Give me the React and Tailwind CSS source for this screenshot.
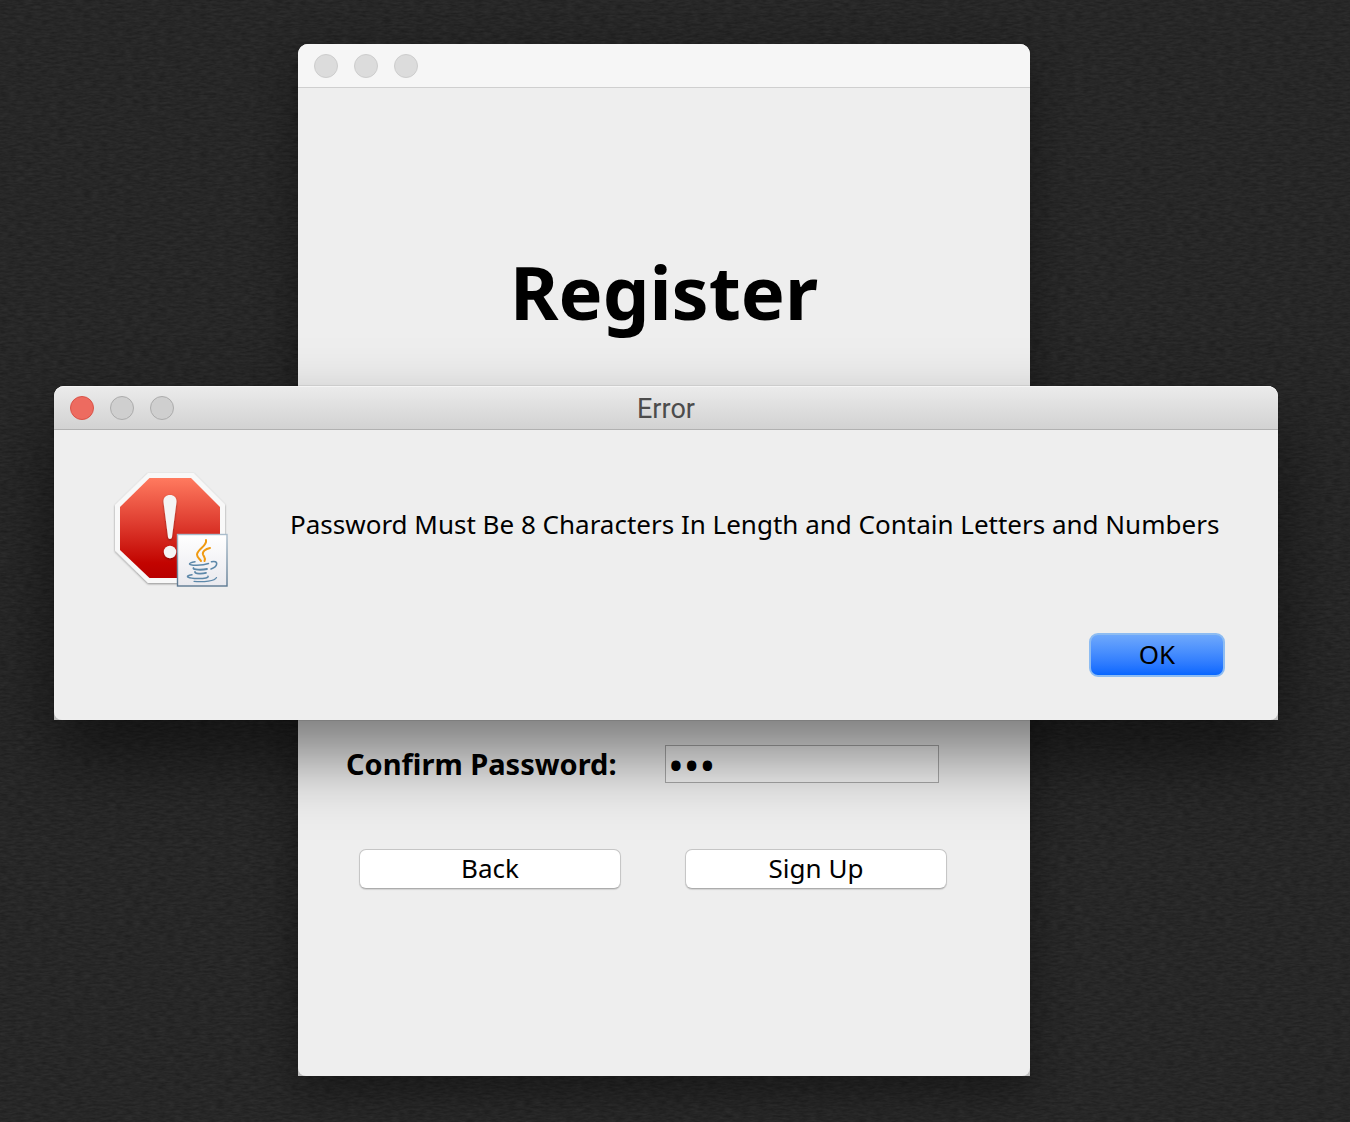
function PaperTexture() {
  return (
    <svg aria-hidden="true" className="absolute inset-0 h-full w-full">
      <filter id="paper" x="0" y="0" width="100%" height="100%" colorInterpolationFilters="sRGB">
        <feTurbulence type="fractalNoise" baseFrequency="0.12 0.45" numOctaves="3" seed="4" />
        <feColorMatrix
          type="matrix"
          values="0.08 0 0 0 0.113  0.08 0 0 0 0.113  0.08 0 0 0 0.113  0 0 0 0 1"
        />
      </filter>
      <rect width="100%" height="100%" filter="url(#paper)" />
    </svg>
  );
}

function WindowDots({ closeActive }) {
  const idle = closeActive
    ? "size-6 rounded-full border border-[#acacac] bg-[#cfcfcf]"
    : "size-6 rounded-full border border-[#cdcdcd] bg-[#dcdcdc]";
  const close = closeActive
    ? "size-6 rounded-full border border-[#d95348] bg-[#ed6b60]"
    : idle;
  return (
    <div className="flex gap-4">
      <button type="button" aria-label="Close" className={close} />
      <button type="button" aria-label="Minimize" className={idle} />
      <button type="button" aria-label="Zoom" className={idle} />
    </div>
  );
}

function StopIcon() {
  return (
    <svg aria-hidden="true" width="128" height="128" viewBox="0 0 128 128" className="shrink-0">
      <defs>
        <linearGradient id="stopRed" x1="0" y1="0" x2="0" y2="1">
          <stop offset="0" stopColor="#ff7a5f" />
          <stop offset="0.45" stopColor="#df3d30" />
          <stop offset="0.85" stopColor="#c20400" />
          <stop offset="1" stopColor="#b90000" />
        </linearGradient>
        <linearGradient id="badge" x1="0" y1="0" x2="0" y2="1">
          <stop offset="0" stopColor="#ffffff" />
          <stop offset="1" stopColor="#e9e9ee" />
        </linearGradient>
        <linearGradient id="badgeEdge" x1="0" y1="0" x2="0" y2="1">
          <stop offset="0" stopColor="#a9bccb" />
          <stop offset="1" stopColor="#5b7891" />
        </linearGradient>
        <filter id="soft" x="-10%" y="-10%" width="120%" height="125%">
          <feDropShadow dx="0" dy="1" stdDeviation="1" floodOpacity="0.4" />
        </filter>
      </defs>
      <path d="M42 7H87.500L119 38.500V85.500L87.500 117H42L9 84.500V39Z" fill="#f8f8f8" filter="url(#soft)" />
      <path d="M43.500 12H85L114 41V84L85 112H43.500L14 84V41Z" fill="url(#stopRed)" />
      <g fill="#f4f4f4" filter="url(#soft)">
        <path d="M64 29C68 29 70.800 31.500 70.500 36L66 71C65.700 73.500 62.300 73.500 62 71L57.500 36C57.200 31.500 60 29 64 29Z" />
        <circle cx="64" cy="86" r="6.200" />
      </g>
      <rect x="71.500" y="68.500" width="49.500" height="51.500" fill="url(#badge)" stroke="url(#badgeEdge)" strokeWidth="1.400" />
      <g fill="none" stroke="#f09a10" strokeLinecap="round">
        <path d="M100 74C101.500 80 91.500 83 91 88.500C91 91.500 94 93 95 95" strokeWidth="2" />
        <path d="M104 82C99.500 83 96 85.500 97 88.500C98 91 100 92 98.500 95" strokeWidth="2" />
      </g>
      <g fill="none" stroke="#5d88a9" strokeLinecap="round">
        <path d="M89 95.800C81 97 82 99.200 90 99.200C96 99.300 99 98.800 102.500 97.500" strokeWidth="1.500" />
        <path d="M105.500 95.800C112.500 94 112.500 100.500 105 103" strokeWidth="1.600" />
        <path d="M87.500 102C86.500 104 96 104.200 101 103" strokeWidth="1.800" />
        <path d="M89 106C89 107.800 96 108 100 106.800" strokeWidth="1.800" />
        <path d="M86 108.800C77.500 110.200 82 112.600 92 112.600C99 112.600 103 111.600 102 110.200" strokeWidth="1.500" />
        <path d="M88 115.400C98 116.200 109 115 110.500 111.500" strokeWidth="1.200" />
      </g>
    </svg>
  );
}

function RegisterWindow() {
  return (
    <section className="col-start-1 row-start-1 mt-[44px] mr-1 mb-[46px] w-full max-w-[732px] self-stretch justify-self-center rounded-t-[10px] bg-[#bdbdbd] shadow-[0_14px_40px_rgba(0,0,0,0.4)]">
      <div className="rounded-t-[10px] rounded-b-[8px] bg-[#eeeeee]">
        <header className="flex h-11 items-center rounded-t-[10px] border-b border-[#cfcfcf] bg-[#f6f6f6] px-4">
          <WindowDots />
        </header>
        <form className="flex h-[988px] flex-col px-12 pt-[150px]" onSubmit={(e) => e.preventDefault()}>
          <h1 className="text-center text-[74px] leading-[108px] font-bold">Register</h1>
          <div className="mt-[399px] flex items-center gap-11">
            <label htmlFor="confirm" className="w-[275px] shrink-0 text-[29px] leading-9 font-bold whitespace-nowrap">
              Confirm Password:
            </label>
            <input
              id="confirm"
              type="password"
              defaultValue="abc"
              className="h-[38px] w-[274px] min-w-0 border border-black/30 bg-white/35 px-0.5 text-[42px] outline-none"
            />
          </div>
          <div className="mt-[66px] flex gap-16 pr-[35px] pl-[13px]">
            <button type="button" className="h-10 flex-1 rounded-[7px] border border-[#c6c6c6] border-b-[#acacac] bg-white pb-0.5 text-[26px] leading-9 shadow-[0_1px_1px_rgba(0,0,0,0.12)]">
              Back
            </button>
            <button type="submit" className="h-10 flex-1 rounded-[7px] border border-[#c6c6c6] border-b-[#acacac] bg-white pb-0.5 text-[26px] leading-9 shadow-[0_1px_1px_rgba(0,0,0,0.12)]">
              Sign Up
            </button>
          </div>
        </form>
      </div>
    </section>
  );
}

function ErrorDialog() {
  return (
    <section
      role="alertdialog"
      aria-labelledby="dialog-title"
      aria-describedby="dialog-message"
      className="z-10 col-start-1 row-start-1 mt-[386px] w-full max-w-[1224px] self-start justify-self-center rounded-t-[10px] bg-[#bdbdbd] shadow-[0_0_1px_rgba(0,0,0,0.7),0_36px_70px_rgba(0,0,0,0.5)]"
    >
      <div className="rounded-t-[10px] rounded-b-[8px] bg-[#eeeeee]">
        <header className="grid h-11 grid-cols-3 items-center rounded-t-[10px] border-t border-b border-t-[#f5f5f5] border-b-[#b1b1b1] bg-linear-to-b from-[#ebebeb] to-[#d2d2d2] px-4">
          <WindowDots closeActive />
          <h2 id="dialog-title" className="pt-0.5 text-center font-[Roboto] text-[27px] leading-8 text-[#4c4c4c]">
            Error
          </h2>
        </header>
        <div className="flex h-[290px] flex-col pt-[36px] pr-[53px] pl-[52px]">
          <div className="flex items-start gap-[56px]">
            <StopIcon />
            <p id="dialog-message" className="mt-[38px] text-[26px] leading-10 whitespace-nowrap">
              Password Must Be 8 Characters In Length and Contain Letters and Numbers
            </p>
          </div>
          <button type="button" className="mt-[39px] h-11 w-[136px] self-end rounded-[9px] border-2 border-[#8dbcf2] bg-linear-to-b from-[#6ea8fb] to-[#0566ff] pb-0.5 text-[26px] leading-9">
            OK
          </button>
        </div>
      </div>
    </section>
  );
}

export default function App() {
  return (
    <main className="relative min-h-screen overflow-hidden bg-[#262626] font-['Noto_Sans',sans-serif] text-black">
      <PaperTexture />
      <div className="relative grid grid-cols-1 pr-[18px]">
        <RegisterWindow />
        <ErrorDialog />
      </div>
    </main>
  );
}
